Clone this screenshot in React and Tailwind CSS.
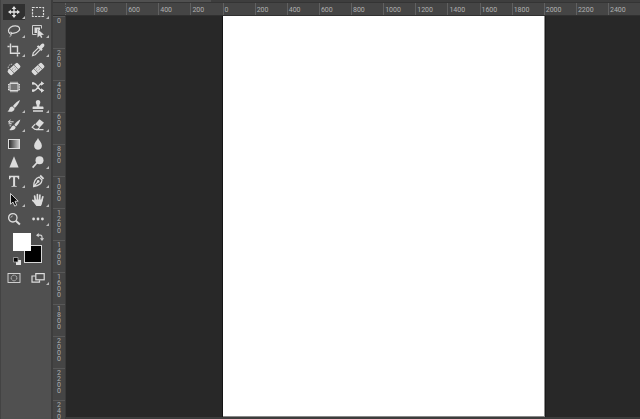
const TOP_MARKS = [800, 600, 400, 200, 0, 200, 400, 600, 800, 1000, 1200, 1400, 1600, 1800, 2000, 2200, 2400];
const SIDE_MARKS = [0, 200, 400, 600, 800, 1000, 1200, 1400, 1600, 1800, 2000, 2200, 2400];

const line = { fill: "none", stroke: "currentColor", strokeWidth: 1.2 };

function Bandage() {
  return (
    <g transform="rotate(-42 8 8)">
      <rect x="1.2" y="5" width="13.6" height="6" rx="1.6" />
      <path d="M5.2 5v6M10.8 5v6" stroke="#505050" strokeWidth="0.6" />
      <path d="M6.6 7h.8M8.6 7h.8M6.6 9.1h.8M8.6 9.1h.8" stroke="#505050" strokeWidth="0.8" />
    </g>
  );
}

const TOOLS = [
  {
    name: "Move",
    flyout: true,
    icon: (
      <>
        <path d="M8 3.5v9M3.5 8h9" {...line} strokeWidth="1.3" />
        <path d="M8 2l2.3 2.9H5.7zM8 14l2.3-2.9H5.7zM2 8l2.9-2.3v4.6zM14 8l-2.9-2.3v4.6z" />
      </>
    )
  },
  {
    name: "Marquee",
    flyout: true,
    icon: <rect x="2.5" y="3.5" width="11" height="9" {...line} strokeDasharray="2.2 1.1" />
  },
  {
    name: "Lasso",
    flyout: true,
    icon: (
      <>
        <path d="M4.1 10.4C1.8 9.3 1.9 6.2 4.6 4.3c2.8-1.9 7.6-1.8 8.8.4 1.2 2.4-1.8 5-5.5 5.5-1.3.2-2.5.2-3.2-.1" {...line} />
        <path d="M3.8 9.5c1.4-.8 2.7.3 2 1.3-.7 1-2.4.3-2.3-.5M5 11.2c.3 1-.1 2-1.3 2.5" {...line} strokeWidth="0.9" />
      </>
    )
  },
  {
    name: "Object selection",
    flyout: true,
    icon: (
      <>
        <path d="M2.5 11.5v-9h9v3M2.5 11.5h4" {...line} strokeWidth="0.9" />
        <path d="M4.5 4.5H10v3L7 6v4H4.5z" />
        <path d="M7.5 6l6.5 5.8-2.8.2 1.2 2.2-1.3.7-1.2-2.4-2.4 1.9z" />
      </>
    )
  },
  {
    name: "Crop",
    flyout: true,
    icon: (
      <path d="M4.5 1.5v9.8h9.6M1.5 4.5h2M5.8 4.5h5.7v5.7M11.5 12.3v2.2" {...line} strokeWidth="1.4" />
    )
  },
  {
    name: "Eyedropper",
    flyout: true,
    icon: (
      <>
        <path d="M9.3 4.3l1.9-2c1.9-1.9 4.4.5 2.6 2.5l-1.9 1.9.8.8-1.5 1.5-4.4-4.4 1.5-1.4z" />
        <path d="M8.3 5.8l-5 5-.7 2.7 2.6-.8 5-5" {...line} />
      </>
    )
  },
  {
    name: "Spot healing",
    icon: (
      <>
        <Bandage />
        <path d="M3.2 9.2C.8 6.5 2.8 2.9 6.6 3.2" {...line} strokeWidth="0.8" strokeDasharray="1.4 1" />
      </>
    )
  },
  { name: "Healing brush", icon: <Bandage /> },
  {
    name: "Patch",
    icon: (
      <>
        <rect x="4" y="4.5" width="8" height="7" fill="#747474" stroke="currentColor" />
        <path
          d="M5 4V2.8M7 4V2.8M9 4V2.8M11 4V2.8M5 12v1.2M7 12v1.2M9 12v1.2M11 12v1.2M3.5 5.5H2M3.5 7.2H2M3.5 8.9H2M3.5 10.6H2M12.5 5.5H14M12.5 7.2H14M12.5 8.9H14M12.5 10.6H14"
          {...line}
        />
      </>
    )
  },
  {
    name: "Content-aware move",
    icon: (
      <>
        <path d="M2 4.5h2c3.5 0 4.3 7 8 7h1M2 11.5h2c3.5 0 4.3-7 8-7h1" {...line} strokeWidth="1.3" />
        <path d="M11 2.2l3.3 2.3L11 6.8zM11 9.2l3.3 2.3L11 13.8zM2 3.2h2.3v2.4H2zM2 10.4h2.3v2.4H2z" />
      </>
    )
  },
  {
    name: "Brush",
    flyout: true,
    icon: (
      <>
        <path d="M14 2c-2.3 1-5.3 3.8-7.1 6.1l1.9 1.8C10.9 7.9 13.4 4.7 14 2z" />
        <path d="M6.4 8.5c-1.9-.1-2.7 1-3 2.2-.3 1.2-.7 2-2 2.5 3.1 1.2 7 .4 7.2-2.8z" />
      </>
    )
  },
  {
    name: "Clone stamp",
    flyout: true,
    icon: (
      <path d="M5.8 4.2c0-3 4.5-3 4.5 0 0 1.4-1 2-1 4.3h3.2c.6 0 1 .4 1 1v1.6H2.6V9.5c0-.6.4-1 1-1h3.2c0-2.3-1-2.900-1-4.300zM3 12.200h10v1.500H3z" />
    )
  },
  {
    name: "History brush",
    flyout: true,
    icon: (
      <>
        <path d="M14.3 2.5c-2.3.9-4.6 3.3-6 5.4l1.8 1.5c2-1.7 3.9-4.5 4.2-6.9z" />
        <path d="M7.8 8.4c-2.2-.1-2.6 3.1-4.6 4.5 3 1 6.2-.1 6.5-2.9z" />
        <path d="M3 4.8h4.6M2.5 6.8h3.3M3.5 8.8h1.7M4.6 2.9L2.3 4.8l2.3 1.7" {...line} strokeWidth="1" />
      </>
    )
  },
  {
    name: "Eraser",
    flyout: true,
    icon: (
      <>
        <path d="M9.5 2.3L14 5.8l-4.3 4.6L5.3 7z" />
        <path d="M5.2 7.2l-3 3L5 12.4h2.7l1.9-2M6 12.7h7.5" {...line} />
      </>
    )
  },
  {
    name: "Gradient",
    icon: (
      <>
        <defs>
          <linearGradient id="tool-gradient">
            <stop offset="0" stopColor="#252525" />
            <stop offset="1" stopColor="#d0d0d0" />
          </linearGradient>
        </defs>
        <rect x="2.5" y="3.5" width="11" height="9" fill="url(#tool-gradient)" stroke="currentColor" />
      </>
    )
  },
  {
    name: "Blur",
    icon: <path d="M8 2c.8 2.2 3.9 4.7 3.9 7.8 0 5.2-7.8 5.2-7.8 0C4.1 6.7 7.2 4.2 8 2z" />
  },
  { name: "Sharpen", icon: <path d="M8 2.2l4.6 11.4H3.4z" /> },
  {
    name: "Dodge",
    flyout: true,
    icon: (
      <>
        <circle cx="9.5" cy="6.2" r="4" />
        <path d="M7 8.8l-4.4 4.8" {...line} strokeWidth="1.7" />
      </>
    )
  },
  {
    name: "Type",
    flyout: true,
    icon: (
      <path d="M3 2.8h10.2v3.5h-.9c-.3-1.5-.8-2.1-2.2-2.1h-1v7.7c0 .9.3 1.1 1.6 1.1v.8H5.5V13c1.3 0 1.6-.2 1.6-1.1V4.2h-1c-1.4 0-1.9.6-2.2 2.1H3z" />
    )
  },
  {
    name: "Pen",
    flyout: true,
    icon: (
      <>
        <path d="M10.8 1.8l3.4 3.4-1.3 1.4-3.4-3.4z" />
        <path d="M9.1 4.2L12 7.1c-.2 3-2.2 5.3-8.4 6.5C3.8 8.6 5.7 5.2 9.1 4.2zM4 13.2L7.800 9" {...line} />
        <circle cx="8.2" cy="8.4" r="1.3" />
      </>
    )
  },
  {
    name: "Path selection",
    flyout: true,
    icon: (
      <path
        d="M4.5 1.5v10.7L7 10.1l1.700 4 2-.9L9 9.300l3.200-.2z"
        fill="#0b0b0b"
        stroke="currentColor"
        strokeWidth="0.9"
      />
    )
  },
  {
    name: "Hand",
    flyout: true,
    icon: (
      <>
        <path
          d="M5.3 8.5L4.6 4M7.4 8V2.5M9.6 8l.3-5M11.7 9l1.1-4.2M5.5 11L2.8 8.4"
          {...line}
          strokeWidth="1.7"
          strokeLinecap="round"
        />
        <path d="M4.6 7.5h7.9c0 2.6-.5 4.8-1.7 6.5H6.4c-.9-.9-1.8-2.2-2.5-3.4z" />
      </>
    )
  },
  {
    name: "Zoom",
    icon: (
      <>
        <circle cx="6.8" cy="6.8" r="4.2" {...line} strokeWidth="1.3" />
        <path d="M9.8 9.8l4.1 3.8" {...line} strokeWidth="2" />
        <path d="M4.9 6.7c.1-1 .8-1.7 1.8-1.7" {...line} strokeWidth="0.7" />
      </>
    )
  },
  {
    name: "Edit toolbar",
    flyout: true,
    icon: (
      <>
        <circle cx="3.6" cy="8" r="1.4" />
        <circle cx="8" cy="8" r="1.4" />
        <circle cx="12.4" cy="8" r="1.4" />
      </>
    )
  }
];

function ToolButton({ name, icon, flyout, selected }) {
  return (
    <button
      type="button"
      aria-label={name}
      aria-pressed={selected}
      className={
        selected
          ? "relative flex h-4 w-[22px] items-center justify-center bg-[#303030] text-[#e4e4e4]"
          : "relative flex h-4 w-[22px] items-center justify-center text-[#dcdcdc]"
      }
    >
      <svg viewBox="0 0 16 16" className="size-4" fill="currentColor">
        {icon}
      </svg>
      {flyout && (
        <svg viewBox="0 0 3 3" className="absolute right-0 bottom-px size-[3px]" fill="#bcbcbc">
          <path d="M3 0v3H0z" />
        </svg>
      )}
    </button>
  );
}

function Swatches() {
  return (
    <div className="relative ml-[11px] h-8 w-[31px]">
      <button
        type="button"
        aria-label="Background color"
        className="absolute top-3 left-[11px] size-[18px] border border-[#d8d8d8] bg-black"
      />
      <button
        type="button"
        aria-label="Foreground color"
        className="absolute top-0 left-0 size-[18px] bg-white"
      />
      <button type="button" aria-label="Swap colors" className="absolute top-0 right-0 text-[#d0d0d0]">
        <svg viewBox="0 0 8 8" className="size-2" fill="currentColor">
          <path d="M2 2.2h2.2C5.400 2.200 6 2.800 6 4v2" {...line} />
          <path d="M0 2.2L2.7.1v4.2zM6 8L3.9 5.3h4.2z" />
        </svg>
      </button>
      <button type="button" aria-label="Default colors" className="absolute bottom-0 left-0">
        <svg viewBox="0 0 8 8" className="size-2">
          <path d="M3 3h5v5H3z" fill="#e0e0e0" />
          <path d="M.5.5H5V5H.5z" fill="#080808" stroke="#bdbdbd" strokeWidth="0.7" />
        </svg>
      </button>
    </div>
  );
}

function Toolbar() {
  return (
    <aside className="w-[53px] shrink-0 border-r-2 border-l border-r-[#3d3d3d] border-l-[#434343] bg-[#505050] pt-[3px] pl-px">
      <div className="grid h-[225px] w-12 auto-rows-fr grid-cols-2 place-items-center">
        {TOOLS.map((tool, i) => (
          <ToolButton key={tool.name} {...tool} selected={i === 0} />
        ))}
      </div>
      <div className="pt-[5px]">
        <Swatches />
      </div>
      <div className="mt-1 grid w-12 grid-cols-2 place-items-center pt-px">
        <ToolButton
          name="Quick mask"
          icon={
            <>
              <rect x="2" y="3.5" width="12" height="9" {...line} strokeWidth="0.9" />
              <circle cx="8" cy="8" r="2.8" {...line} strokeWidth="0.9" strokeDasharray="1 0.5" />
            </>
          }
        />
        <ToolButton
          name="Screen mode"
          flyout
          icon={
            <>
              <path d="M5.500 6H2v6.200h7.500v-2" {...line} />
              <rect x="5.800" y="3.600" width="8.400" height="6.200" {...line} />
            </>
          }
        />
      </div>
    </aside>
  );
}

function TopRuler() {
  return (
    <div className="flex h-[13px] shrink-0 overflow-hidden border-b border-[#303030] bg-[#454545] text-[7px] leading-[10px] text-[#b0b0b0]">
      <div className="w-[13px] shrink-0 border-r border-dotted border-[#626262]" />
      <div className="w-7 shrink-0 pt-0.5">000</div>
      {TOP_MARKS.map((mark, i) => (
        <div key={i} className="min-w-0 flex-1 border-l border-[#606060] pt-0.5 pl-px">
          {mark}
        </div>
      ))}
    </div>
  );
}

function SideRuler() {
  return (
    <div className="w-[13px] shrink-0 overflow-hidden border-r border-[#3a3a3a] bg-[#454545] text-center text-[7px] leading-[6px] text-[#b0b0b0]">
      {SIDE_MARKS.map((mark) => (
        <div key={mark} className="flex h-8 flex-col border-t border-[#585858] pt-px">
          {String(mark)
            .split("")
            .map((digit, i) => (
              <span key={i}>{digit}</span>
            ))}
        </div>
      ))}
    </div>
  );
}

export default function App() {
  return (
    <div className="flex h-screen overflow-hidden bg-[#282828] font-['Roboto','Open_Sans',sans-serif]">
      <Toolbar />
      <main className="flex min-w-0 flex-1 flex-col">
        <div className="flex h-[3px] shrink-0 border-b border-[#343434] bg-[#3e3e3e]">
          <div className="w-[158px] bg-[#505050]" />
        </div>
        <TopRuler />
        <div className="flex min-h-0 flex-1">
          <SideRuler />
          <div className="grid min-w-0 flex-1 grid-cols-[157fr_322fr_95fr] border-b-2 border-[#3c3c3c]">
            <div className="border-r border-[#141414]" />
            <div className="border-r border-b border-r-[#8a8a8a] border-b-[#8a8a8a] bg-white" />
            <div className="border-l border-[#1a1a1a]" />
          </div>
        </div>
      </main>
    </div>
  );
}
